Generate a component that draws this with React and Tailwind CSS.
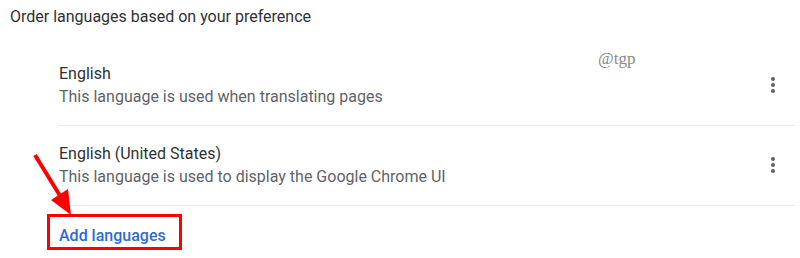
const FONT = { fontFamily: 'Roboto, "Liberation Sans", Arial, sans-serif' };

const languages = [
  { name: 'English', note: 'This language is used when translating pages' },
  { name: 'English (United States)', note: 'This language is used to display the Google Chrome UI' },
];

// Vertical three-dot menu button
function MoreIcon() {
  return (
    <svg width="24" height="24" viewBox="0 0 24 24" fill="#5f6368">
      <circle cx="12" cy="6" r="2" />
      <circle cx="12" cy="12" r="2" />
      <circle cx="12" cy="18" r="2" />
    </svg>
  );
}

function LanguageRow({ name, note }) {
  return (
    <div className="ml-[59px] mr-[5px] flex items-center border-b border-[#e8eaed] pt-[16px] pb-[17px]">
      <div className="flex-1 text-[16px] leading-[23px]">
        <div className="text-[#303134]">{name}</div>
        <div className="text-[#5f6368]">{note}</div>
      </div>
      <button className="mr-[10px] flex h-6 w-6 items-center justify-center">
        <MoreIcon />
      </button>
    </div>
  );
}

export default function App() {
  return (
    <div className="relative h-[258px] w-[800px] overflow-hidden bg-white" style={FONT}>
      <div className="px-[10px] pt-[7px] text-[16px] leading-[20px] text-[#303134]">
        Order languages based on your preference
      </div>

      <div className="mt-[19px]">
        {languages.map((l) => (
          <LanguageRow key={l.name} {...l} />
        ))}
      </div>

      <div className="ml-[59px] mt-[20px] text-[16px] font-medium leading-[20px] text-[#2f6bd6]">
        Add languages
      </div>

      {/* watermark */}
      <div
        className="absolute left-[598px] top-[49px] text-[17px] leading-[20px] text-[#8a8a8a]"
        style={{ fontFamily: '"Liberation Serif", "DejaVu Serif", serif' }}
      >
        @tgp
      </div>

      {/* annotation: red box + arrow */}
      <div className="absolute left-[47px] top-[214px] h-[36px] w-[135px] border-[3px] border-[#ff0000]" />
      <svg className="absolute left-0 top-0" width="800" height="258" fill="none">
        <line x1="35" y1="155" x2="62" y2="199" stroke="#ff0000" strokeWidth="4" />
        <polygon points="71,215 51,200 68,189" fill="#ff0000" />
      </svg>
    </div>
  );
}
